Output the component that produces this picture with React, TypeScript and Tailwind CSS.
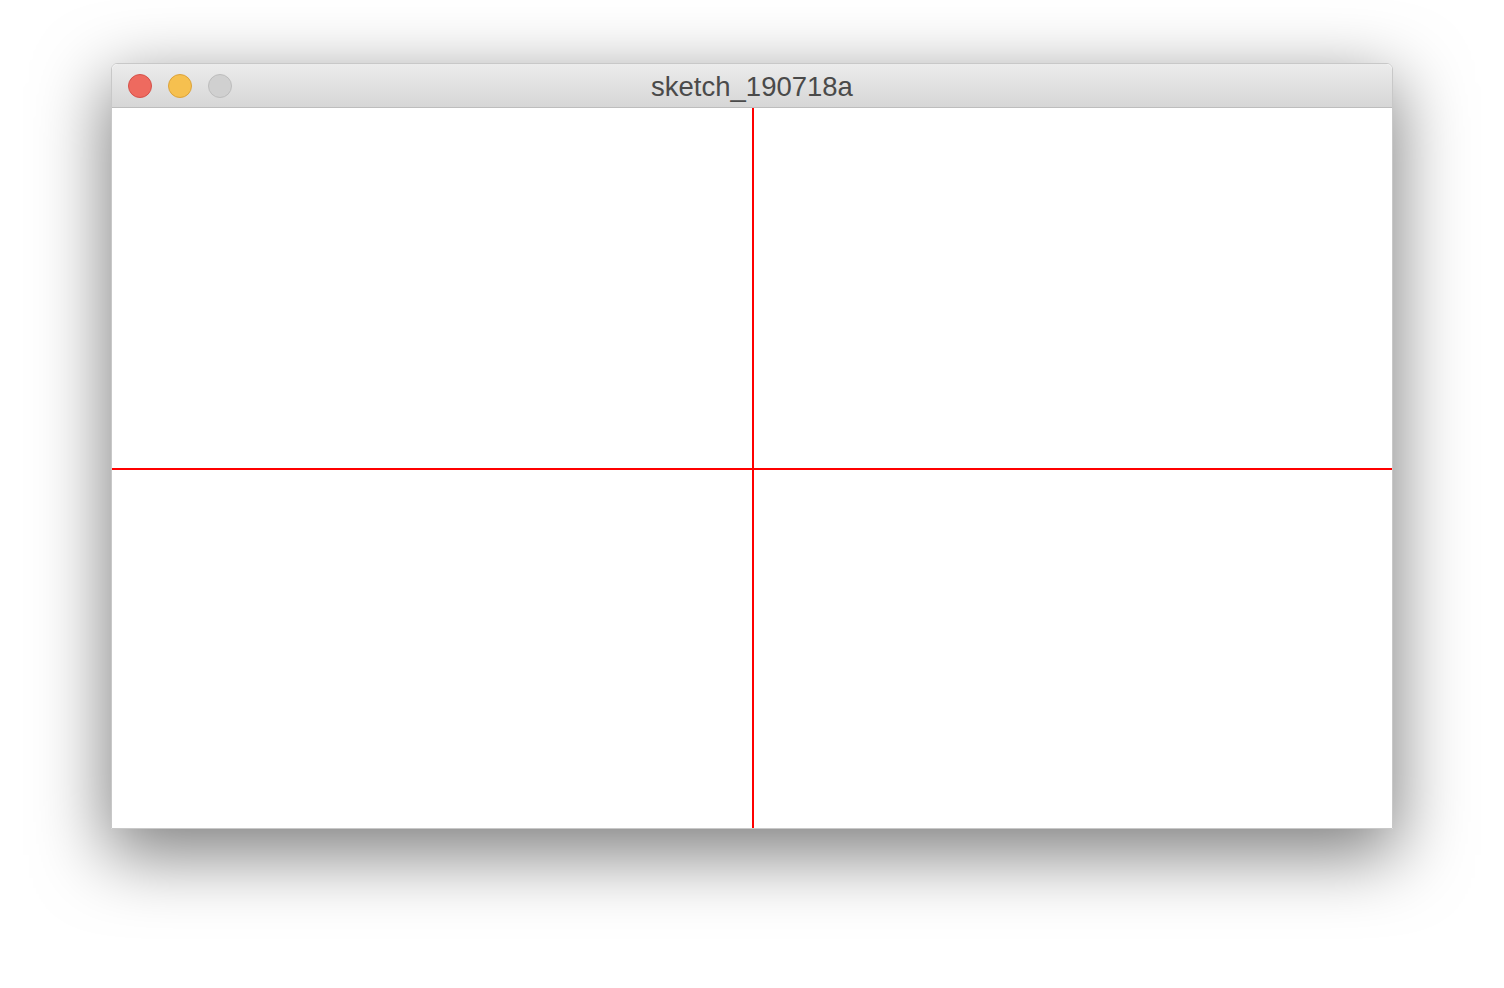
import React from "react";

const Light = ({ color, border }: { color: string; border: string }) => (
  <span className={`block w-6 h-6 rounded-full border ${color} ${border}`} />
);

export default function App() {
  return (
    <div className="w-[1504px] h-[988px] bg-white flex items-start justify-center pt-[63px]">
      <div className="w-[1282px] flex flex-col rounded-t-[6px] shadow-[0_22px_70px_4px_rgba(0,0,0,0.5)] border border-[#c8c8c8]">
        {/* title bar */}
        <div className="h-[44px] relative flex items-center px-4 rounded-t-[6px] bg-gradient-to-b from-[#ececec] to-[#d6d6d6] border-b border-[#bdbdbd]">
          <div className="flex items-center gap-4">
            <Light color="bg-[#ee6a5f]" border="border-[#d5514a]" />
            <Light color="bg-[#f6c04f]" border="border-[#dca33a]" />
            <Light color="bg-[#d0d0d0]" border="border-[#bdbdbd]" />
          </div>
          <div
            className="absolute inset-0 flex items-center justify-center pt-[3px] text-[27.5px] text-[#4a4a4a] pointer-events-none"
            style={{ fontFamily: '"Liberation Sans", Arial, sans-serif' }}
          >
            sketch_190718a
          </div>
        </div>
        {/* sketch canvas */}
        <div className="w-[1280px] h-[720px] bg-white grid grid-cols-2 grid-rows-2">
          <div />
          <div className="border-l-2 border-[#ff0000]" />
          <div className="border-t-2 border-[#ff0000]" />
          <div className="border-t-2 border-l-2 border-[#ff0000]" />
        </div>
      </div>
    </div>
  );
}
